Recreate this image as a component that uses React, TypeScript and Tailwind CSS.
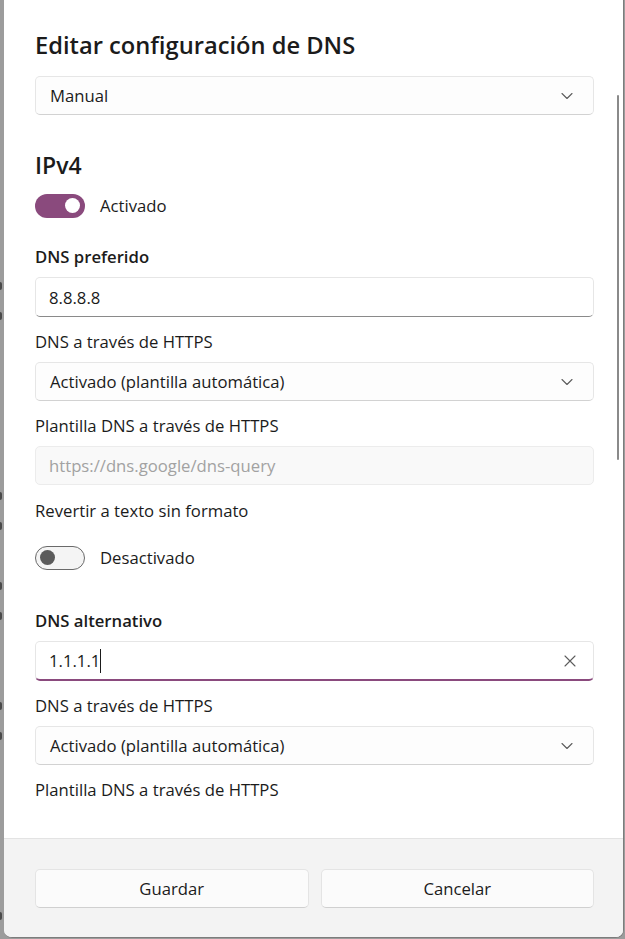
import React from 'react';

const FONT = { fontFamily: '"Segoe UI", "Open Sans", "Noto Sans", sans-serif' };

const Chevron = () => (
  <svg width="12" height="8" viewBox="0 0 12 8" fill="none">
    <path d="M1 1.5 L6 6.5 L11 1.5" stroke="#5c5c5c" strokeWidth="1.1" strokeLinecap="round" strokeLinejoin="round" />
  </svg>
);

const CloseIcon = () => (
  <svg width="12" height="12" viewBox="0 0 12 12" fill="none">
    <path d="M1 1 L11 11 M11 1 L1 11" stroke="#5c5c5c" strokeWidth="1.1" strokeLinecap="round" />
  </svg>
);

const Select = ({ value, className = '' }: { value: string; className?: string }) => (
  <div className={`h-[39px] flex items-center justify-between pl-[14px] pr-[20px] bg-[#fdfdfd] border border-[#e6e6e6] border-b-[#d2d2d2] rounded-[5px] ${className}`}>
    <span className="text-[16.7px] text-[#1b1b1b]">{value}</span>
    <Chevron />
  </div>
);

const Label = ({ children, bold, className = '' }: { children: React.ReactNode; bold?: boolean; className?: string }) => (
  <div className={`h-[24px] leading-[24px] text-[16.7px] text-[#1b1b1b] ${bold ? 'font-semibold' : ''} ${className}`}>{children}</div>
);

const Toggle = ({ on, label, className = '' }: { on: boolean; label: string; className?: string }) => (
  <div className={`flex items-center gap-[15px] ${className}`}>
    {on ? (
      <div className="w-[50px] h-[24px] rounded-full bg-[#8a4a7d] flex items-center justify-end pr-[5px]">
        <div className="w-[15px] h-[15px] rounded-full bg-white" />
      </div>
    ) : (
      <div className="w-[50px] h-[24px] rounded-full bg-[#f4f4f4] border border-[#6a6a6a] flex items-center pl-[4px]">
        <div className="w-[15px] h-[15px] rounded-full bg-[#5b5b5b]" />
      </div>
    )}
    <span className="text-[16.7px] text-[#1b1b1b]">{label}</span>
  </div>
);

export default function App() {
  // fragments of the window behind the dialog, peeking out on the left
  const strip = [160, 130, 30, 180, 30, 60, 30, 90, 30, 180];
  return (
    <div className="w-[625px] h-[939px] bg-[#9c9c9c] flex overflow-hidden" style={FONT}>
      <div className="w-[4px] shrink-0 flex flex-col items-start">
        {strip.map((h, i) => (
          <div key={i} style={{ height: h }} className="w-full flex items-end">
            {i > 0 && <div className="w-[2px] h-[8px] bg-[#4a4a4a] rounded-r-[2px]" />}
          </div>
        ))}
      </div>
      <div className="w-[620px] h-[938px] shrink-0 bg-white border-r border-b border-[#7c7c7c] rounded-br-[8px] rounded-bl-[8px] flex flex-col overflow-hidden relative">
        <div className="absolute right-[4px] top-[95px] w-[2px] h-[365px] bg-[#8a8a8a] rounded-full" />
        <div className="h-[838px] shrink-0 pl-[31px] pr-[29px] flex flex-col">
          <h1 className="mt-[29px] h-[32px] leading-[32px] text-[23.7px] font-semibold text-[#1b1b1b]">Editar configuración de DNS</h1>
          <Select value="Manual" className="mt-[15px]" />
          <h2 className="mt-[34px] h-[32px] leading-[32px] text-[23px] font-semibold text-[#1b1b1b]">IPv4</h2>
          <Toggle on label="Activado" className="mt-[12px]" />
          <Label bold className="mt-[27px]">DNS preferido</Label>
          <div className="mt-[8px] h-[40px] flex items-center pl-[13px] bg-white border border-[#e6e6e6] border-b-[#8a8a8a] rounded-[5px] text-[16.7px] text-[#1b1b1b]">8.8.8.8</div>
          <Label className="mt-[13px]">DNS a través de HTTPS</Label>
          <Select value="Activado (plantilla automática)" className="mt-[8px]" />
          <Label className="mt-[13px]">Plantilla DNS a través de HTTPS</Label>
          <div className="mt-[8px] h-[39px] flex items-center pl-[13px] bg-[#f9f9f9] border border-[#ececec] rounded-[5px] text-[16.7px] text-[#a2a2a2]">https://dns.google/dns-query</div>
          <Label className="mt-[14px]">Revertir a texto sin formato</Label>
          <Toggle on={false} label="Desactivado" className="mt-[22px]" />
          <Label bold className="mt-[39px]">DNS alternativo</Label>
          <div className="mt-[8px] h-[40px] flex items-center justify-between pl-[13px] pr-[17px] bg-white border border-[#e6e6e6] border-b-2 border-b-[#8a4a7d] rounded-[5px]">
            <span className="flex items-center text-[16.7px] text-[#1b1b1b]">1.1.1.1<span className="w-[1px] h-[24px] bg-[#1b1b1b]" /></span>
            <CloseIcon />
          </div>
          <Label className="mt-[13px]">DNS a través de HTTPS</Label>
          <Select value="Activado (plantilla automática)" className="mt-[8px]" />
          <Label className="mt-[13px]">Plantilla DNS a través de HTTPS</Label>
        </div>
        <div className="flex-1 bg-[#f3f3f3] border-t border-[#e3e3e3] pl-[31px] pr-[29px] pt-[30px] flex gap-[12px]">
          <button className="flex-1 h-[39px] bg-[#fbfbfb] border border-[#e4e4e4] border-b-[#d0d0d0] rounded-[5px] text-[16.7px] text-[#1b1b1b]">Guardar</button>
          <button className="flex-1 h-[39px] bg-[#fbfbfb] border border-[#e4e4e4] border-b-[#d0d0d0] rounded-[5px] text-[16.7px] text-[#1b1b1b]">Cancelar</button>
        </div>
      </div>
    </div>
  );
}
